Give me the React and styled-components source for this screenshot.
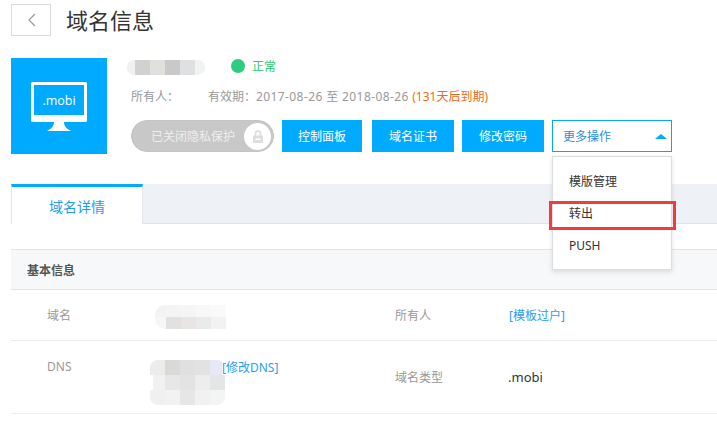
import React from "react";
import styled, { createGlobalStyle } from "styled-components";

const BLUE = "#00aaff";

const GlobalStyle = createGlobalStyle`
  html, body {
    margin: 0;
    padding: 0;
    background: #fff;
    overflow: hidden;
  }
  * {
    box-sizing: border-box;
  }
`;

// pixelated patches that hide the domain name in the original
const nameTiles = [
  [["#f0f0f0", 8], ["#d3d0d0", 15], ["#e0e0dd", 15], ["#c9c9c9", 15], ["#dfe0e1", 15], ["#f1f2f2", 10]],
];
const domainTiles = [
  [["#f3f3f3", 11], ["#f5f4f4", 15], ["#f6f5f5", 15], ["#f8f8f8", 15], ["#fafafa", 15]],
  [["#f6f6f6", 11], ["#e3e1df", 15], ["#e8e5e4", 15], ["#e9eaea", 15], ["#f2f2f2", 15]],
];
const dnsTiles = [
  [["#ececec", 15], ["#d9d9d5", 15], ["#e0e0e2", 15], ["#e2e2e3", 15], ["#e6e9f3", 12]],
  [["#fff", 3], ["#f1f1f1", 12], ["#e6e7e6", 15], ["#e2e3e2", 15], ["#eceded", 15], ["#e5e5e5", 15]],
  [["#f0f0f0", 15], ["#f2f2f2", 15], ["#e6e6e6", 15], ["#f1f1f1", 15], ["#f3f4f4", 15]],
];

function Mosaic({ rows, rowHeight, width, rounded }) {
  const height = rows.length * rowHeight;
  return (
    <svg width={width} height={height} style={{ display: "block", borderRadius: rounded }}>
      {rows.map((tiles, r) => {
        let x = 0;
        return tiles.map(([fill, w], i) => {
          const rect = <rect key={r + "-" + i} x={x} y={r * rowHeight} width={w} height={rowHeight} fill={fill} />;
          x += w;
          return rect;
        });
      })}
    </svg>
  );
}

export default function App() {
  return (
    <Page>
      <GlobalStyle />
      <Header>
        <BackButton>
          <svg width="12" height="16" viewBox="0 0 12 16" fill="none" stroke="#999" strokeWidth="1.2">
            <path d="M10 2 L4 8 L10 14" />
          </svg>
        </BackButton>
        <Title>域名信息</Title>
      </Header>

      <Summary>
        <Logo>
          <svg width="96" height="96" viewBox="0 0 96 96">
            <rect x="20" y="24" width="56" height="40" rx="1.5" fill="#fff" />
            <rect x="23" y="27" width="50" height="30" fill={BLUE} />
            <path d="M43 64 H53 C53 68 55 70 60 73 H36 C41 70 43 68 43 64 Z" fill="#fff" />
            <text x="48" y="47" fill="#fff" fontSize="12.5" textAnchor="middle" fontFamily="'Open Sans', sans-serif">
              .mobi
            </text>
          </svg>
        </Logo>
        <Info>
          <NameRow>
            <Mosaic rows={nameTiles} rowHeight={15} width={78} rounded="7px" />
            <Status>正常</Status>
          </NameRow>
          <MetaRow>
            <Owner>所有人：</Owner>
            <span>
              有效期：<Dates>2017-08-26 至 2018-08-26 </Dates>
              <Expiry>(131天后到期)</Expiry>
            </span>
          </MetaRow>
          <Actions>
            <PrivacyToggle>
              已关闭隐私保护
              <Knob>
                <svg width="10" height="13" viewBox="0 0 10 13">
                  <path d="M2.5 6 V3.5 a2.5 2.5 0 0 1 5 0 V6" fill="none" stroke="#ddd" strokeWidth="1.6" />
                  <rect x="0" y="5.5" width="10" height="7.5" rx="1" fill="#ddd" />
                  <rect x="2.5" y="8.5" width="5" height="1.6" fill="#fff" />
                </svg>
              </Knob>
            </PrivacyToggle>
            <ActionButton $width={80}>控制面板</ActionButton>
            <ActionButton $width={82} $left={2}>域名证书</ActionButton>
            <ActionButton $width={82}>修改密码</ActionButton>
            <MoreWrap>
              <MoreButton>
                更多操作
                <Caret />
              </MoreButton>
              <Menu>
                <MenuItem>模版管理</MenuItem>
                <MenuItem>转出</MenuItem>
                <MenuItem>PUSH</MenuItem>
                <Highlight />
              </Menu>
            </MoreWrap>
          </Actions>
        </Info>
      </Summary>

      <TabBar>
        <Tab>域名详情</Tab>
      </TabBar>

      <SectionTitle>基本信息</SectionTitle>
      <DetailRow $height={51}>
        <RowTitle>域名</RowTitle>
        <DomainValue>
          <Mosaic rows={domainTiles} rowHeight={12} width={71} rounded="10px 0 0 10px" />
        </DomainValue>
        <Label>所有人</Label>
        <LinkText>[模板过户]</LinkText>
      </DetailRow>
      <DetailRow $height={73}>
        <RowTitle $shift={-11}>DNS</RowTitle>
        <DnsValue>
          <Mosaic rows={dnsTiles} rowHeight={15} width={75} rounded="8px" />
          <DnsLink>[修改DNS]</DnsLink>
        </DnsValue>
        <Label>域名类型</Label>
        <PlainValue>.mobi</PlainValue>
      </DetailRow>
    </Page>
  );
}

const Page = styled.div`
  width: 717px;
  height: 422px;
  padding: 4px 0 0 11px;
  overflow: hidden;
  font-family: "Noto Sans", "Noto Sans CJK SC", sans-serif;
  font-size: 12px;
  color: #333;
`;

const Header = styled.div`
  display: flex;
  align-items: center;
  gap: 15px;
  height: 32px;
`;

const BackButton = styled.div`
  width: 40px;
  height: 32px;
  border: 1px solid #dcdcdc;
  display: flex;
  align-items: center;
  justify-content: center;
`;

const Title = styled.h1`
  margin: 0;
  font-size: 22px;
  font-weight: 400;
  line-height: 32px;
  color: #333;
`;

const Summary = styled.div`
  display: flex;
  margin-top: 22px;
  height: 126px;
`;

const Logo = styled.div`
  width: 96px;
  height: 96px;
  background: ${BLUE};
  svg {
    display: block;
  }
`;

const Info = styled.div`
  padding-left: 24px;
  flex: 1;
`;

const NameRow = styled.div`
  display: flex;
  align-items: center;
  height: 15px;
  margin: 2px 0 0 -4px;
`;

const Status = styled.span`
  display: flex;
  align-items: center;
  gap: 7px;
  margin: -4px 0 0 26px;
  color: #2ecc71;
  &::before {
    content: "";
    width: 14px;
    height: 14px;
    border-radius: 50%;
    background: #2ecc7f;
  }
`;

const MetaRow = styled.div`
  display: flex;
  height: 20px;
  line-height: 20px;
  margin-top: 12px;
  color: #999;
`;

const Owner = styled.span`
  width: 77px;
`;

const Dates = styled.span`
  letter-spacing: 0.4px;
`;

const Expiry = styled.span`
  color: #f26a21;
`;

const Actions = styled.div`
  display: flex;
  margin-top: 13px;
  gap: 8px;
`;

const PrivacyToggle = styled.div`
  width: 143px;
  height: 32px;
  border-radius: 16px;
  background: #c8c8c8;
  border: 1px solid #c4c4c4;
  color: #eee;
  display: flex;
  align-items: center;
  justify-content: space-between;
  padding: 0 2px 0 19px;
`;

const Knob = styled.span`
  width: 27px;
  height: 27px;
  border-radius: 50%;
  background: #fff;
  display: flex;
  align-items: center;
  justify-content: center;
`;

const ActionButton = styled.div`
  width: ${(p) => p.$width}px;
  height: 32px;
  margin-left: ${(p) => p.$left || 0}px;
  background: ${BLUE};
  color: #fff;
  display: flex;
  align-items: center;
  justify-content: center;
`;

const MoreWrap = styled.div`
  position: relative;
`;

const MoreButton = styled.div`
  width: 120px;
  height: 32px;
  border: 1px solid ${BLUE};
  color: #2a8fe0;
  display: flex;
  align-items: center;
  justify-content: space-between;
  padding: 0 4px 0 10px;
`;

const Caret = styled.span`
  width: 0;
  height: 0;
  border-left: 6px solid transparent;
  border-right: 6px solid transparent;
  border-bottom: 5px solid ${BLUE};
`;

const Menu = styled.div`
  position: absolute;
  top: 36px;
  left: 0;
  width: 120px;
  height: 114px;
  background: #fff;
  border: 1px solid #ddd;
  box-shadow: 0 2px 5px rgba(0, 0, 0, 0.12);
  padding-top: 10px;
  z-index: 2;
`;

const MenuItem = styled.div`
  height: 32px;
  line-height: 30px;
  padding-left: 16px;
  color: #333;
`;

const Highlight = styled.div`
  position: absolute;
  top: 44px;
  left: -4px;
  width: 127px;
  height: 29px;
  border: 3px solid #f23c3c;
`;

const TabBar = styled.div`
  display: flex;
  width: 706px;
  height: 40px;
  background: #eef1f5;
  border-bottom: 1px solid #e1e4e8;
`;

const Tab = styled.div`
  width: 132px;
  height: 40px;
  background: #fff;
  border-top: 3px solid ${BLUE};
  border-left: 1px solid #e1e4e8;
  border-right: 1px solid #e1e4e8;
  color: #1c9df0;
  font-size: 14px;
  display: flex;
  align-items: center;
  justify-content: center;
`;

const SectionTitle = styled.div`
  width: 706px;
  height: 41px;
  margin-top: 25px;
  padding-left: 16px;
  background: #f7f8fa;
  border-top: 1px solid #e3e3e3;
  border-bottom: 1px solid #e3e3e3;
  font-weight: 700;
  color: #555;
  display: flex;
  align-items: center;
`;

const DetailRow = styled.div`
  display: grid;
  grid-template-columns: 144px 240px 114px 1fr;
  align-items: center;
  width: 706px;
  height: ${(p) => p.$height}px;
  border-bottom: 1px solid #ececec;
`;

const Label = styled.span`
  color: #999;
`;

const RowTitle = styled(Label)`
  padding-left: 36px;
  margin-top: ${(p) => (p.$shift || 0) * 2}px;
`;

const DomainValue = styled.div`
  margin-top: 3px;
`;

const DnsValue = styled.div`
  position: relative;
  margin: 10px 0 0 -5px;
`;

const LinkText = styled.span`
  color: #2a9df4;
`;

const DnsLink = styled(LinkText)`
  position: absolute;
  top: -2px;
  left: 72px;
`;

const PlainValue = styled.span`
  color: #333;
  font-size: 13px;
  margin-left: -1px;
`;
